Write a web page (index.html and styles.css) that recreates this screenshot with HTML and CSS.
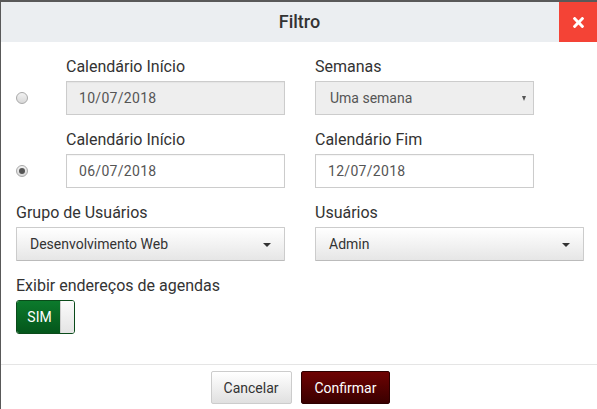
FILE: index.html
```html
<!DOCTYPE html>
<html lang="pt-BR">
<head>
<meta charset="utf-8">
<title>Filtro</title>
<link rel="stylesheet" href="styles.css">
</head>
<body>
<div class="modal">
  <div class="modal-header">
    <span class="spacer"></span>
    <h4 class="modal-title">Filtro</h4>
    <button class="close" type="button" aria-label="Fechar">
      <svg width="11" height="11" viewBox="0 80 352 352"><path fill="#fff" d="M242.72 256l100.07-100.07c12.28-12.28 12.28-32.19 0-44.48l-22.24-22.24c-12.28-12.28-32.19-12.28-44.48 0L176 189.28 75.93 89.21c-12.28-12.28-32.19-12.28-44.48 0L9.21 111.45c-12.28 12.28-12.28 32.190 0 44.48L109.28 256 9.21 356.07c-12.28 12.28-12.28 32.19 0 44.48l22.240 22.240c12.28 12.28 32.2 12.28 44.48 0L176 322.72l100.07 100.07c12.28 12.28 32.2 12.28 44.48 0l22.24-22.24c12.28-12.28 12.28-32.19 0-44.48L242.72 256z"/></svg>
    </button>
  </div>
  <div class="modal-body">
    <div class="grid">
      <div class="radio-field">
        <div class="radio-cell"><span class="radio"></span></div>
        <div class="field">
          <label class="label">Calendário Início</label>
          <div class="input disabled">10/07/2018</div>
        </div>
      </div>
      <div class="field narrow">
        <label class="label">Semanas</label>
        <div class="select native disabled">Uma semana<span class="tri-small"></span></div>
      </div>

      <div class="radio-field">
        <div class="radio-cell"><span class="radio checked"></span></div>
        <div class="field">
          <label class="label">Calendário Início</label>
          <div class="input">06/07/2018</div>
        </div>
      </div>
      <div class="field narrow">
        <label class="label">Calendário Fim</label>
        <div class="input">12/07/2018</div>
      </div>

      <div class="field">
        <label class="label">Grupo de Usuários</label>
        <div class="select bs">Desenvolvimento Web<span class="caret"></span></div>
      </div>
      <div class="field">
        <label class="label">Usuários</label>
        <div class="select bs">Admin<span class="caret"></span></div>
      </div>

      <div class="field full">
        <label class="label">Exibir endereços de agendas</label>
        <div class="switch"><span class="switch-on">SIM</span><span class="switch-knob"></span></div>
      </div>
    </div>
  </div>
  <div class="modal-footer">
    <button class="btn btn-default" type="button">Cancelar</button>
    <button class="btn btn-primary" type="button">Confirmar</button>
  </div>
</div>
</body>
</html>
```
FILE: styles.css
```css
html, body {
  margin: 0;
  padding: 0;
  overflow: hidden;
  height: 100%;
}
body {
  background: #595959;
  font-family: Roboto, "Liberation Sans", Arial, sans-serif;
  color: #333;
}
.modal {
  margin: 2px 0 0 1px;
  width: 597px;
  background: #fff;
  height: 407px;
}
.modal-header {
  display: grid;
  grid-template-columns: 39px 1fr 39px;
  height: 40px;
  background: #ebeef1;
}
.modal-title {
  margin: 0;
  font-size: 18px;
  font-weight: 500;
  line-height: 40px;
  text-align: center;
  color: #333;
}
.close {
  border: 0;
  margin: 0;
  padding: 0;
  background: #f44336;
  display: flex;
  align-items: center;
  justify-content: center;
}
.modal-body {
  padding: 15px 15px 30px 15px;
}
.grid {
  display: grid;
  grid-template-columns: 269px 269px;
  column-gap: 30px;
  row-gap: 15px;
}
.full {
  grid-column: 1 / 2;
}
.narrow {
  width: 219px;
}
.radio-field {
  display: grid;
  grid-template-columns: 50px 1fr;
  align-items: end;
}
.radio-cell {
  height: 34px;
  display: flex;
  align-items: center;
}
.radio {
  width: 12px;
  height: 12px;
  box-sizing: border-box;
  border-radius: 50%;
  border: 1px solid #a9a9a9;
  background: linear-gradient(#f2f2f2, #d8d8d8);
  display: flex;
  align-items: center;
  justify-content: center;
}
.radio.checked::after {
  content: "";
  width: 6px;
  height: 6px;
  border-radius: 50%;
  background: #555;
}
.field {
  display: flex;
  flex-direction: column;
}
.label {
  font-size: 16px;
  line-height: 20px;
  margin-bottom: 4px;
  color: #333;
}
.input, .select {
  box-sizing: border-box;
  height: 34px;
  border: 1px solid #ccc;
  font-size: 14px;
  line-height: 20px;
  padding: 6px 12px;
  color: #555;
  background: #fff;
  position: relative;
}
.input {
  letter-spacing: 0.3px;
  box-shadow: inset 0 1px 1px rgba(0,0,0,0.04);
}
.input.disabled, .select.disabled {
  background: #eee;
}
.select.native {
  padding-left: 14px;
}
.select.bs {
  padding-left: 13px;
  color: #333;
  background: linear-gradient(#ffffff, #e6e6e6);
  border-color: #ccc #ccc #bbb;
  border-radius: 1px;
}
.tri-small {
  position: absolute;
  right: 7px;
  top: 14px;
  width: 0;
  height: 0;
  border-left: 2.5px solid transparent;
  border-right: 2.5px solid transparent;
  border-top: 5px solid #555;
}
.caret {
  position: absolute;
  right: 13px;
  top: 15px;
  width: 0;
  height: 0;
  border-left: 4px solid transparent;
  border-right: 4px solid transparent;
  border-top: 4px solid #333;
}
.switch {
  display: flex;
  width: 59px;
  height: 34px;
  box-sizing: border-box;
  border: 1px solid #0a4b1a;
  border-radius: 3px;
  overflow: hidden;
}
.switch-on {
  flex: 1;
  background: linear-gradient(#0c7a2c, #04561b);
  color: #fff;
  font-size: 14px;
  line-height: 32px;
  text-align: center;
  padding-left: 2px;
}
.switch-knob {
  width: 13px;
  background: linear-gradient(#fbfbfb, #e4e4e4);
  border-left: 1px solid #ccc;
}
.modal-footer {
  border-top: 1px solid #e5e5e5;
  padding: 6px 15px 5px 17px;
  display: flex;
  justify-content: center;
  gap: 9px;
}
.btn {
  font-family: Roboto, "Liberation Sans", Arial, sans-serif;
  font-size: 14px;
  line-height: 20px;
  padding: 6px 12px;
  height: 33px;
  box-sizing: border-box;
  border-radius: 2px;
  margin: 0;
}
.btn-default {
  color: #333;
  background: linear-gradient(#ffffff, #e0e0e0);
  border: 1px solid #ccc;
}
.btn-primary {
  color: #fff;
  background: linear-gradient(#6e0303, #3a0000);
  border: 1px solid #2d0000;
  padding: 6px 13px;
}
```
